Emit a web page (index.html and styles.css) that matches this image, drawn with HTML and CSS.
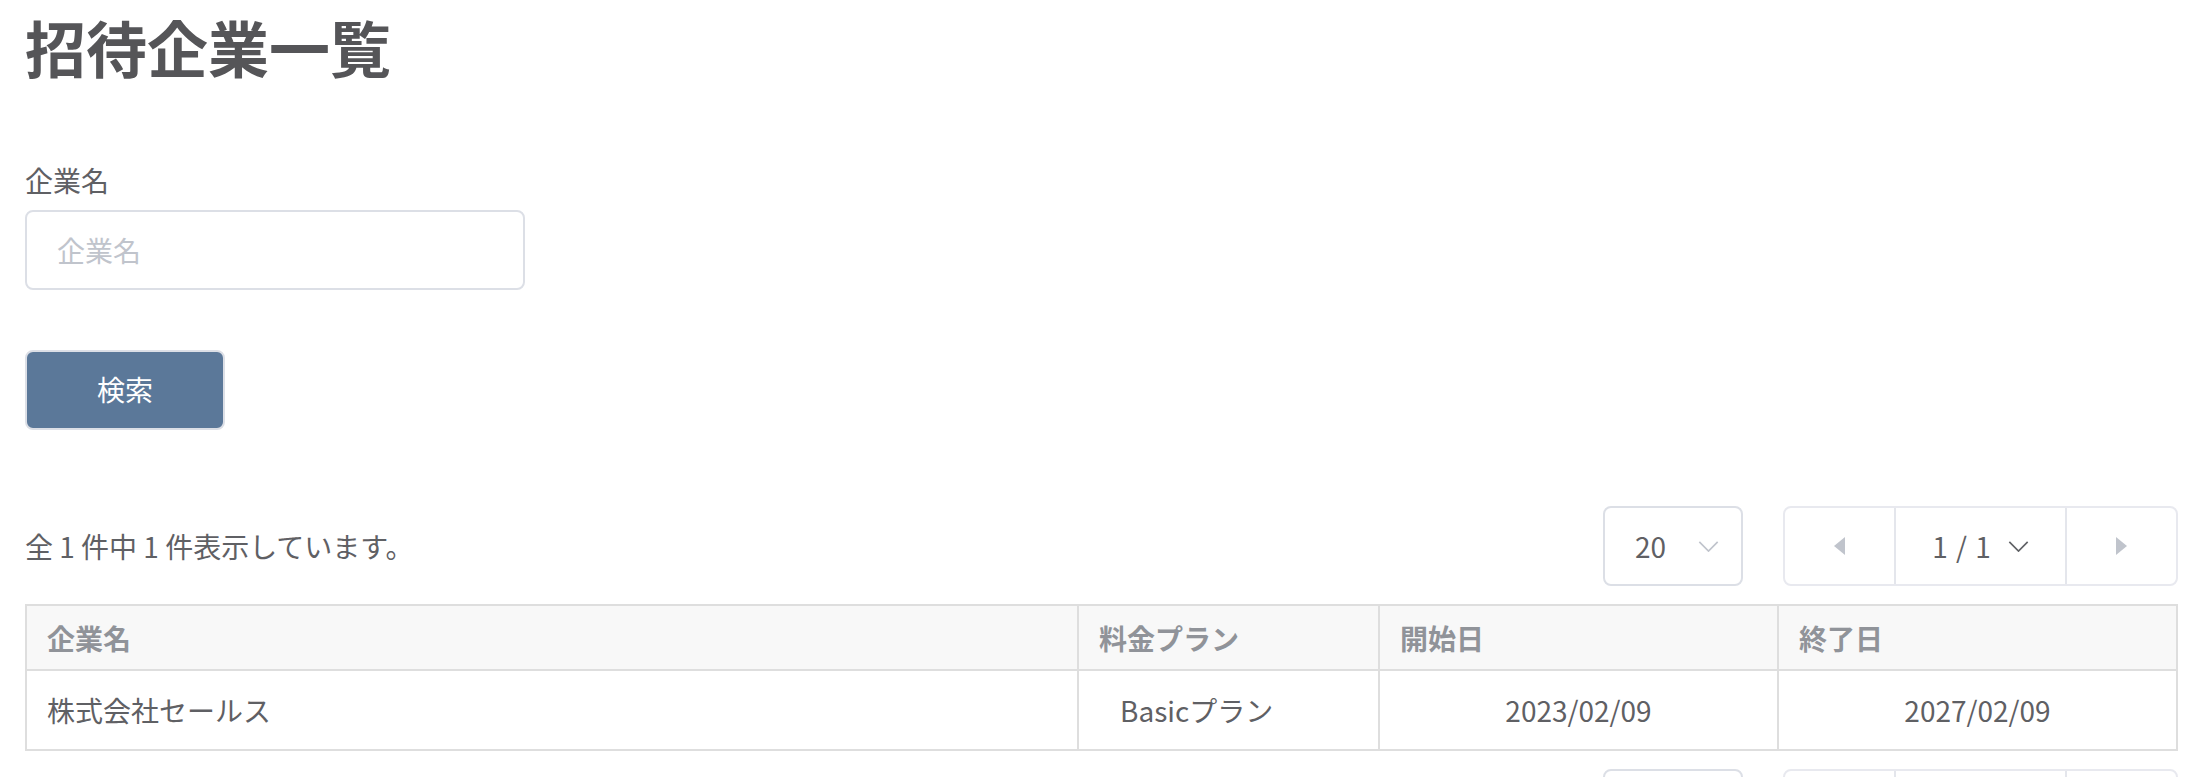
FILE: index.html
```html
<!DOCTYPE html>
<html lang="ja">
<head>
    <meta charset="UTF-8">
    <meta name="viewport" content="width=device-width, initial-scale=1.0">
    <title>招待企業一覧</title>
    <link rel="stylesheet" href="styles.css">
</head>
<body>
    <div class="page">
        <h1 class="page-title">招待企業一覧</h1>

        <!-- Search form -->
        <div class="search">
            <label class="field-label" for="company-name">企業名</label>
            <input id="company-name" class="text-input" type="text" placeholder="企業名">
            <button class="btn-search" type="button">検索</button>
        </div>

        <!-- Result toolbar -->
        <div class="toolbar">
            <p class="result-count">全 1 件中 1 件表示しています。</p>
            <div class="paging">
                <div class="per-page">
                    <span>20</span>
                    <svg class="chevron chevron-light" viewBox="0 0 22 12"><path d="M1 1 L11 11 L21 1" /></svg>
                </div>
                <div class="pager">
                    <div class="pager-arrow">
                        <svg viewBox="0 0 11 18"><path d="M11 0 L0 9 L11 18 Z" /></svg>
                    </div>
                    <div class="pager-current">
                        <span>1 / 1</span>
                        <svg class="chevron" viewBox="0 0 22 12"><path d="M1 1 L11 11 L21 1" /></svg>
                    </div>
                    <div class="pager-arrow">
                        <svg viewBox="0 0 11 18"><path d="M0 0 L11 9 L0 18 Z" /></svg>
                    </div>
                </div>
            </div>
        </div>

        <table class="company-table">
            <thead>
                <tr>
                    <th class="col-name">企業名</th>
                    <th class="col-plan">料金プラン</th>
                    <th class="col-date">開始日</th>
                    <th class="col-date">終了日</th>
                </tr>
            </thead>
            <tbody>
                <tr>
                    <td>株式会社セールス</td>
                    <td class="cell-plan">Basicプラン</td>
                    <td class="cell-date">2023/02/09</td>
                    <td class="cell-date">2027/02/09</td>
                </tr>
            </tbody>
        </table>

        <!-- Bottom paging -->
        <div class="toolbar toolbar-bottom">
            <div class="paging">
                <div class="per-page">
                    <span>20</span>
                    <svg class="chevron chevron-light" viewBox="0 0 22 12"><path d="M1 1 L11 11 L21 1" /></svg>
                </div>
                <div class="pager">
                    <div class="pager-arrow">
                        <svg viewBox="0 0 11 18"><path d="M11 0 L0 9 L11 18 Z" /></svg>
                    </div>
                    <div class="pager-current">
                        <span>1 / 1</span>
                        <svg class="chevron" viewBox="0 0 22 12"><path d="M1 1 L11 11 L21 1" /></svg>
                    </div>
                    <div class="pager-arrow">
                        <svg viewBox="0 0 11 18"><path d="M0 0 L11 9 L0 18 Z" /></svg>
                    </div>
                </div>
            </div>
        </div>
    </div>
</body>
</html>
```

FILE: styles.css
```css
body {
    margin: 0;
    font-family: "Noto Sans CJK JP", "Noto Sans", sans-serif;
    color: #5f6064;
    background: #fff;
}

.page {
    padding: 0 18px 40px 25px;
}

.page-title {
    margin: 0 0 64px;
    font-size: 61px;
    line-height: 94px;
    font-weight: 700;
    color: #555558;
}

.search {
    display: flex;
    flex-direction: column;
    align-items: flex-start;
}

.field-label {
    margin-top: 2px;
    font-size: 28px;
    line-height: 40px;
    color: #5f6064;
}

.text-input {
    margin-top: 10px;
    width: 500px;
    height: 80px;
    box-sizing: border-box;
    padding: 0 30px;
    border: 2px solid #dcdfe6;
    border-radius: 8px;
    font-family: inherit;
    font-size: 28px;
    color: #5f6064;
    outline: none;
}

.text-input::placeholder {
    color: #c0c4cc;
}

.btn-search {
    margin-top: 60px;
    width: 200px;
    height: 80px;
    box-sizing: border-box;
    padding: 0 0 3px;
    border: 2px solid #dcdfe6;
    border-radius: 8px;
    background: #5b7899;
    color: #fff;
    font-family: inherit;
    font-size: 28px;
}

.toolbar {
    margin-top: 76px;
    display: flex;
    align-items: center;
    justify-content: space-between;
}

.toolbar-bottom {
    margin-top: 18px;
    justify-content: flex-end;
}

.result-count {
    margin: 0;
    font-size: 28px;
    line-height: 40px;
}

.paging {
    display: flex;
    gap: 40px;
}

.per-page {
    width: 140px;
    height: 80px;
    box-sizing: border-box;
    border: 2px solid #dcdfe6;
    border-radius: 8px;
    display: flex;
    align-items: center;
    padding-left: 30px;
    gap: 32px;
    font-size: 28px;
}

.chevron {
    width: 21px;
    height: 11px;
    fill: none;
    stroke: #606266;
    stroke-width: 1.8;
}

.chevron-light {
    stroke: #c0c4cc;
}

.pager {
    width: 395px;
    height: 80px;
    box-sizing: border-box;
    border: 2px solid #e8e9ef;
    border-radius: 8px;
    display: flex;
}

.pager-arrow {
    width: 109px;
    display: flex;
    align-items: center;
    justify-content: center;
}

.pager-arrow svg {
    width: 11px;
    height: 18px;
    fill: #c0c4cc;
}

.pager-current {
    flex: 1;
    display: flex;
    align-items: center;
    justify-content: center;
    gap: 17px;
    border-left: 2px solid #e4e6ec;
    border-right: 2px solid #e4e6ec;
    font-size: 28px;
    word-spacing: 2px;
}

.company-table {
    margin-top: 18px;
    width: 100%;
    border-spacing: 0;
    border-top: 2px solid #dedede;
    border-left: 2px solid #dedede;
    font-size: 28px;
}

.company-table th,
.company-table td {
    border-right: 2px solid #dedede;
    border-bottom: 2px solid #dedede;
    padding: 0 20px;
    text-align: left;
}

.company-table th {
    height: 63px;
    background: #f8f8f8;
    color: #909399;
    font-weight: 700;
}

.company-table td {
    height: 78px;
    color: #5f6064;
}

.col-name {
    width: 1010px;
}

.col-plan {
    width: 259px;
}

.col-date {
    width: 357px;
}

.company-table .cell-plan {
    padding-left: 41px;
}

.company-table .cell-date {
    text-align: center;
}
```
